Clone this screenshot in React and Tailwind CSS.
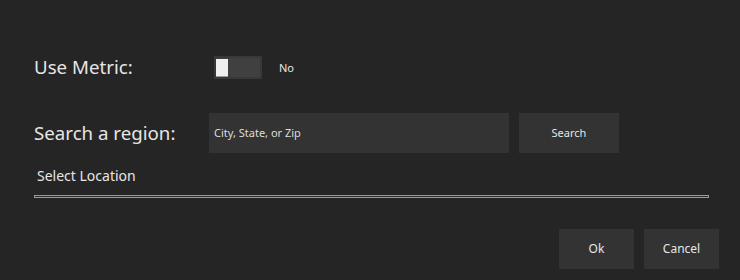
export default function App() {
  const font = { fontFamily: '"Noto Sans", "Open Sans", sans-serif' };
  return (
    <div className="w-[740px] h-[280px] bg-[#252525] text-[#e6e6e6] flex flex-col" style={font}>
      <div className="flex items-center h-[23px] mt-[56px]">
        <div className="ml-[34px] w-[180px] text-[18.7px] leading-none">Use Metric:</div>
        <div className="w-[48px] h-[23px] bg-[#404040] border-2 border-[#383838] flex items-center">
          <div className="w-[12px] h-[18px] bg-[#f0f0f0] border-b border-[#9a9a9a]"></div>
        </div>
        <div className="ml-[17px] text-[11px] leading-none">No</div>
      </div>
      <div className="flex items-center mt-[34px] h-[40px]">
        <div className="ml-[34px] w-[175px] text-[18.7px] leading-none">Search a region:</div>
        <div className="w-[300px] h-[40px] bg-[#333333] flex items-center pl-[5px] text-[11px] text-[#dcdcdc]">City, State, or Zip</div>
        <div className="ml-[10px] w-[100px] h-[40px] bg-[#333333] flex items-center justify-center text-[11px]">Search</div>
      </div>
      <div className="ml-[37px] mt-[16px] text-[14px] leading-none">Select Location</div>
      <div className="ml-[34px] mt-[12px] w-[675px] h-[3px] border border-[#9a9a9a] bg-[#2a2a2a]"></div>
      <div className="flex justify-end gap-[10px] mr-[21px] mt-[31px]">
        <div className="w-[75px] h-[40px] bg-[#333333] flex items-center justify-center text-[12px]">Ok</div>
        <div className="w-[75px] h-[40px] bg-[#333333] flex items-center justify-center text-[12px]">Cancel</div>
      </div>
    </div>
  );
}
